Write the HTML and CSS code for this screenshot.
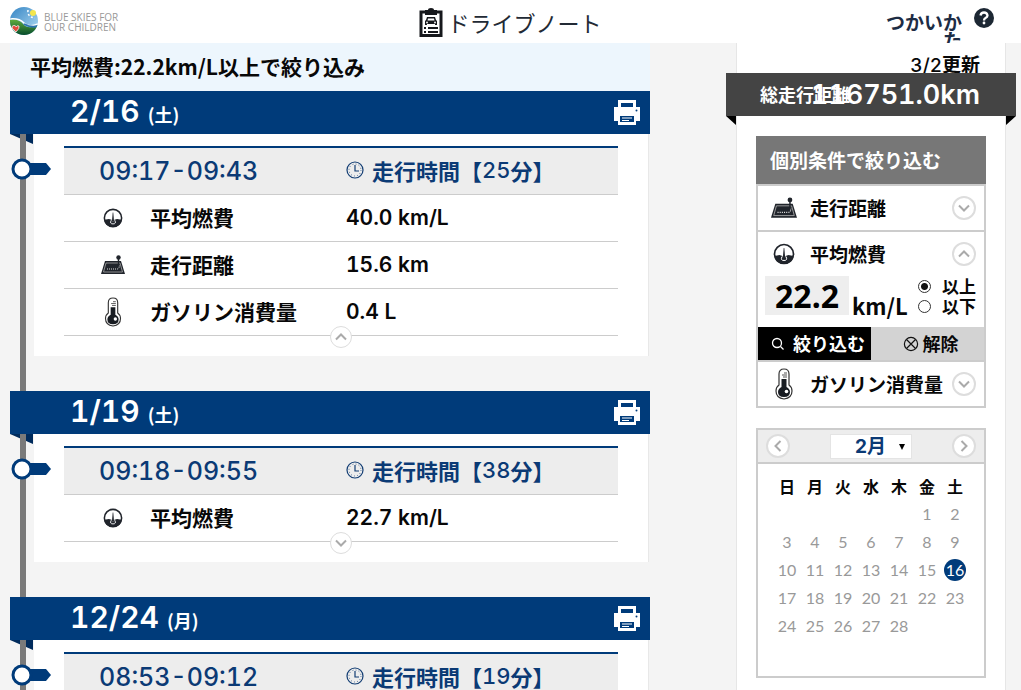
FILE: index.html
```html
<!DOCTYPE html>
<html lang="ja">
<head>
<meta charset="utf-8">
<meta name="viewport" content="width=device-width">
<title>ドライブノート</title>
<link rel="stylesheet" href="styles.css">
</head>
<body>
<svg class="defs" aria-hidden="true">
  <symbol id="printer" viewBox="0 0 26 26"><path fill="#fff" d="M4 0h18v7h4v14h-4v4H4v-4H0V7h4z"/><path fill="#003b7a" d="M7 3h12v4H7zM6 16h14v6H6z"/><path stroke="#fff" stroke-width="1.200" d="M8 18h10M8 20.500h7"/><circle cx="22.500" cy="10.500" r="1" fill="#003b7a"/></symbol>
  <symbol id="gauge" viewBox="0 0 22 22"><circle cx="11" cy="11" r="9.500" fill="#fff" stroke="#20242b" stroke-width="1.700"/><path fill="#20242b" d="M1.500 13l5-1 3 1 .5 2h2l.5-2 3-1 5 1q-1 8-9.500 8T1.500 13z"/><path fill="#20242b" d="M10.700 5h.6l.9 10H9.800z"/><path fill="none" stroke="#fff" d="M9 13.500q-2 4 2 4t2-4"/></symbol>
  <symbol id="road" viewBox="0 0 24 20"><path fill="#20242b" d="M4 6h16l4 13H0z"/><path fill="none" stroke="#aaa" stroke-width=".8" d="M5 8h14l2.500 9h-19z"/><path stroke="#ddd" stroke-dasharray="1 1" fill="none" d="M6 14h10q3 0 2-5"/><path stroke="#20242b" stroke-width="1.400" d="M17.500 3v8"/><circle cx="17.500" cy="2.500" r="2.200" fill="#20242b"/></symbol>
  <symbol id="thermo" viewBox="0 0 18 32"><path fill="#fff" stroke="#333" stroke-width="1.200" d="M4 17V6q0-5 5-5t5 5v11q3 2 3 6 0 7-8 8-8-1-8-8 0-4 3-6z"/><path fill="#181c22" d="M6.500 11h5v8q3.500 2 3.500 5 0 5-6 5t-6-5q0-3 3.500-5z"/><path stroke="#555" d="M7 7h5M9 5h3M8 9h4"/><circle cx="11.500" cy="23.500" r="1.800" fill="#fff"/></symbol>
  <symbol id="clock" viewBox="0 0 18 18"><circle cx="9" cy="9" r="8" fill="none" stroke="#123d73" stroke-width="1.200"/><path fill="none" stroke="#123d73" stroke-width="1.200" d="M9 4v6h4"/><circle cx="9" cy="9" r="6" fill="none" stroke="#123d73" stroke-dasharray=".7 2.440"/></symbol>
  <symbol id="chev" viewBox="0 0 20 20"><path fill="none" stroke="#aaa" stroke-width="2" d="M5 7.500l5 5 5-5"/></symbol>
</svg>

<header class="top">
  <a class="brand" href="#">
    <svg width="28" height="28" viewBox="0 0 28 28" aria-hidden="true">
      <defs><clipPath id="ball"><circle cx="14" cy="14" r="14"/></clipPath>
      <linearGradient id="sky" x2="1" y2="1"><stop stop-color="#3484c4"/><stop offset="1" stop-color="#b5def4"/></linearGradient>
      <linearGradient id="hill" x2="0" y2="1"><stop stop-color="#61ad3e"/><stop offset="1" stop-color="#064c2b"/></linearGradient></defs>
      <g clip-path="url(#ball)"><path fill="url(#sky)" d="M0 0h28v28H0z"/><path fill="url(#hill)" d="M0 13q8-2 13 4t15 1v10H0z"/><path fill="none" stroke="#fff" stroke-width="1.500" d="M0 12q9-1 14 4t14 1"/><path fill="none" stroke="#2d74b0" stroke-width="2" d="M14 17q7 4 14 2"/></g>
      <circle cx="23" cy="6" r="3" fill="#f4e64c"/><path stroke="#fff" stroke-width="1.500" stroke-dasharray="2 2" fill="none" d="M18 3q-1 7 7 8"/>
      <path fill="#e44b3c" stroke="#fff" stroke-width=".7" d="M6 25l-4-4q0-3 2-2.500Q5.500 18 6 20q1-2 3-1 1 2-3 6z"/>
    </svg>
    <span class="brand-text">BLUE SKIES FOR<br>OUR CHILDREN</span>
  </a>
  <h1 class="title">
    <svg width="24" height="30" viewBox="0 0 24 30" aria-hidden="true"><path fill="none" stroke="#16181c" stroke-width="3" d="M2 4h20v23.500H2z"/><path fill="#16181c" d="M6 2h3q0-2 3-2t3 2h3v5H6z"/><path fill="#16181c" d="M8 9h8l1 3 1 1v4h-2v-1H8v1H6v-4l1-1z"/><path fill="#fff" d="M9 10.500h6l.5 2h-7z"/><circle cx="8" cy="14.500" r=".9" fill="#fff"/><circle cx="16" cy="14.500" r=".9" fill="#fff"/><path stroke="#16181c" stroke-width="1.800" d="M5 20h2M9 20h10M5 24h2M9 24h10"/></svg>
    <span>ドライブノート</span>
  </h1>
  <a class="help" href="#">
    <span class="help-text">つかいかた</span>
    <svg width="20" height="20" viewBox="0 0 20 20" aria-hidden="true"><circle cx="10" cy="10" r="10" fill="#1c2733"/><path fill="none" stroke="#fff" stroke-width="2.300" d="M6.500 7.500Q7 4.500 10 4.500t3.500 3q0 1.500-2 2.500-1.500.8-1.500 2.500"/><circle cx="10" cy="15" r="1.400" fill="#fff"/></svg>
  </a>
</header>

<div class="page">
  <main class="log">
    <p class="notice">平均燃費:22.2km/L以上で絞り込み</p>

    <section class="day">
      <div class="bar"><h2>2/16 <small>(土)</small></h2><button class="print" aria-label="印刷"><svg width="26" height="26"><use href="#printer"/></svg></button></div>
      <div class="card">
        <svg class="pin" width="42" height="22" viewBox="0 0 42 22" aria-hidden="true"><path fill="#003b7a" d="M16 5h19l5 6-5 6H16z"/><circle cx="11" cy="11" r="9" fill="#fff" stroke="#003b7a" stroke-width="3"/></svg>
        <div class="trip">
          <div class="trip-head"><span>09:17-09:43</span><b><svg width="18" height="18"><use href="#clock"/></svg>走行時間【<i>25</i>分】</b></div>
          <div class="row"><svg width="20" height="20"><use href="#gauge"/></svg><b>平均燃費</b><span class="value">40.0 km/L</span></div>
          <div class="row"><svg width="24" height="20"><use href="#road"/></svg><b>走行距離</b><span class="value">15.6 km</span></div>
          <div class="row"><svg width="18" height="30"><use href="#thermo"/></svg><b>ガソリン消費量</b><span class="value">0.4 L</span></div>
          <button class="round toggle up" aria-label="閉じる"><svg><use href="#chev"/></svg></button>
        </div>
      </div>
    </section>

    <section class="day">
      <div class="bar"><h2>1/19 <small>(土)</small></h2><button class="print" aria-label="印刷"><svg width="26" height="26"><use href="#printer"/></svg></button></div>
      <div class="card">
        <svg class="pin" width="42" height="22" viewBox="0 0 42 22" aria-hidden="true"><path fill="#003b7a" d="M16 5h19l5 6-5 6H16z"/><circle cx="11" cy="11" r="9" fill="#fff" stroke="#003b7a" stroke-width="3"/></svg>
        <div class="trip">
          <div class="trip-head"><span>09:18-09:55</span><b><svg width="18" height="18"><use href="#clock"/></svg>走行時間【<i>38</i>分】</b></div>
          <div class="row"><svg width="20" height="20"><use href="#gauge"/></svg><b>平均燃費</b><span class="value">22.7 km/L</span></div>
          <button class="round toggle" aria-label="開く"><svg><use href="#chev"/></svg></button>
        </div>
      </div>
    </section>

    <section class="day">
      <div class="bar"><h2>12/24 <small>(月)</small></h2><button class="print" aria-label="印刷"><svg width="26" height="26"><use href="#printer"/></svg></button></div>
      <div class="card">
        <svg class="pin" width="42" height="22" viewBox="0 0 42 22" aria-hidden="true"><path fill="#003b7a" d="M16 5h19l5 6-5 6H16z"/><circle cx="11" cy="11" r="9" fill="#fff" stroke="#003b7a" stroke-width="3"/></svg>
        <div class="trip">
          <div class="trip-head"><span>08:53-09:12</span><b><svg width="18" height="18"><use href="#clock"/></svg>走行時間【<i>19</i>分】</b></div>
        </div>
      </div>
    </section>
  </main>

  <aside class="side">
    <p class="updated"><i>3/2</i>更新</p>
    <div class="ribbon"><span class="ribbon-label">総走行距離</span><strong>116751.0km</strong></div>
    <form class="filter">
      <h2>個別条件で絞り込む</h2>
      <div class="filter-box">
        <div class="item"><svg width="26" height="22"><use href="#road"/></svg><b>走行距離</b><button type="button" class="round" aria-label="開く"><svg><use href="#chev"/></svg></button></div>
        <div class="item"><svg width="22" height="22"><use href="#gauge"/></svg><b>平均燃費</b><button type="button" class="round up" aria-label="閉じる"><svg><use href="#chev"/></svg></button></div>
        <div class="entry">
          <input class="amount" id="amount" type="text" value="22.2"><label class="unit" for="amount">km/L</label>
          <div class="options">
            <label><input type="radio" name="side" checked>以上</label>
            <label><input type="radio" name="side">以下</label>
          </div>
        </div>
        <div class="actions">
          <button type="button" class="apply"><svg width="14" height="14" viewBox="0 0 14 14" aria-hidden="true"><circle cx="6" cy="6" r="4.500" fill="none" stroke="#fff" stroke-width="1.300"/><path stroke="#fff" stroke-width="1.300" d="M9.500 9.500l3 3"/></svg>絞り込む</button>
          <button type="button" class="clear"><svg width="16" height="16" viewBox="0 0 16 16" aria-hidden="true"><path fill="none" stroke="#111" stroke-width="1.200" d="M3.500 3.500l9 9M12.500 3.500l-9 9"/><circle cx="8" cy="8" r="6.600" fill="none" stroke="#111" stroke-width="1.200"/></svg>解除</button>
        </div>
        <div class="item"><svg width="20" height="32"><use href="#thermo"/></svg><b>ガソリン消費量</b><button type="button" class="round" aria-label="開く"><svg><use href="#chev"/></svg></button></div>
      </div>
    </form>
    <section class="calendar">
      <div class="cal-head">
        <button class="round left" aria-label="前の月"><svg><use href="#chev"/></svg></button>
        <div class="month"><select aria-label="月"><option>2月</option></select><svg width="6" height="6" viewBox="0 0 6 6" aria-hidden="true"><path d="M0 0h6L3 6z"/></svg></div>
        <button class="round right" aria-label="次の月"><svg><use href="#chev"/></svg></button>
      </div>
      <table>
        <thead><tr><th>日</th><th>月</th><th>火</th><th>水</th><th>木</th><th>金</th><th>土</th></tr></thead>
        <tbody>
          <tr><td></td><td></td><td></td><td></td><td></td><td>1</td><td>2</td></tr>
          <tr><td>3</td><td>4</td><td>5</td><td>6</td><td>7</td><td>8</td><td>9</td></tr>
          <tr><td>10</td><td>11</td><td>12</td><td>13</td><td>14</td><td>15</td><td><span class="today">16</span></td></tr>
          <tr><td>17</td><td>18</td><td>19</td><td>20</td><td>21</td><td>22</td><td>23</td></tr>
          <tr><td>24</td><td>25</td><td>26</td><td>27</td><td>28</td><td></td><td></td></tr>
        </tbody>
      </table>
    </section>
  </aside>
</div>
</body>
</html>
```
FILE: styles.css
```css
* { box-sizing: border-box; }
body {
  margin: 0;
  height: 100vh;
  overflow: hidden;
  background: #f4f4f4;
  color: #080808;
  font-family: "Noto Sans CJK JP", sans-serif;
  font-size: 20px;
  font-variant-numeric: tabular-nums;
}
h1, h2, p { margin: 0; }
i { font-style: normal; font-family: Inter, sans-serif; font-weight: 500; }
a { color: inherit; text-decoration: none; }
button { border: 0; padding: 0; margin: 0; font: inherit; color: inherit; cursor: pointer; }
svg { display: block; flex: none; }
.defs { position: absolute; width: 0; height: 0; }

.top {
  display: grid;
  grid-template-columns: 1fr auto 1fr;
  height: 43px;
  padding: 0 10px;
  overflow: hidden;
  background: #fff;
}
.brand { display: flex; gap: 6px; padding-top: 7px; }
.brand-text { padding-top: 5px; font: 500 10px/10px "Open Sans", sans-serif; color: #999; }
.title { display: flex; gap: 4px; padding-top: 8px; font-size: 22px; line-height: 28px; font-weight: 400; color: #222a35; }
.help { display: flex; justify-content: flex-end; gap: 12px; padding: 8px 17px 0 0; }
.help-text { width: 78px; padding-top: 5px; text-align: right; font-size: 19px; line-height: 18px; font-weight: 700; color: #1d2c44; word-break: break-all; }

.page {
  display: grid;
  grid-template-columns: minmax(0, 1fr) 270px;
  gap: 86px;
  padding: 0 15px 0 10px;
}
.notice { height: 48px; padding-left: 20px; background: #edf6fd; font-size: 21px; line-height: 46px; font-weight: 700; }

.day { position: relative; padding-bottom: 35px; }
.day::before { content: ""; position: absolute; z-index: 1; left: 10px; top: 0; bottom: 0; width: 6px; background: #7a7a7a; }
.bar { position: relative; z-index: 2; display: flex; justify-content: space-between; align-items: center; height: 43px; padding: 0 10px 0 60px; background: #003b7a; color: #fff; }
.bar h2 { font: 600 30px/40px Inter, sans-serif; font-variant-numeric: tabular-nums; }
.bar small { font: 700 18px/40px "Noto Sans CJK JP", sans-serif; }
.print { background: none; }
.card { position: relative; margin: 0 1px 0 24px; padding: 12px 30px 20px; background: #fff; border: 1px solid #e8e8e8; border-width: 0 1px 0 0; }
.card::before { content: ""; position: absolute; left: -24px; top: 0; width: 23px; height: 10px; background: #002b5c; clip-path: polygon(0 0, 100% 0, 100% 100%); }
.pin { position: absolute; z-index: 2; left: -23px; top: 24px; }
.trip { position: relative; }
.trip-head { display: grid; grid-template-columns: 247px 1fr; align-items: center; height: 49px; padding-left: 35px; border-top: 2px solid #003b7a; border-bottom: 1px solid #ccc; background: #ededed; color: #0b3a75; font-size: 22px; }
.trip-head span { font: 500 25px/30px Inter, sans-serif; font-variant-numeric: tabular-nums; }
.trip-head b { display: flex; align-items: center; height: 46px; padding-bottom: 2px; }
.trip-head b svg { margin-right: 8px; }
.row { display: grid; grid-template-columns: 74px 196px 1fr; align-items: center; height: 47px; padding-left: 12px; border-bottom: 1px solid #ccc; }
.row svg { justify-self: center; }
.row b { padding-bottom: 2px; font-size: 21px; }
.value { font: 600 21px/46px Inter, sans-serif; font-variant-numeric: tabular-nums; }

.round { display: grid; place-items: center; width: 24px; height: 24px; border: 2px solid #ddd; border-radius: 50%; background: #fff; }
.round svg { width: 20px; height: 20px; }
.up svg { transform: rotate(180deg); }
.left svg { transform: rotate(90deg); }
.right svg { transform: rotate(-90deg); }
.toggle { position: absolute; left: 0; right: 0; bottom: -12px; margin: 0 auto; width: 22px; height: 22px; border-width: 1px; }

.side { padding: 0 20px; background: #fff; border: 1px solid #e6e6e6; border-width: 0 1px; }
.side > * { margin-left: -1px; margin-right: -1px; }
.updated { height: 30px; padding-right: 6px; text-align: right; font-size: 19px; line-height: 42px; font-weight: 700; }
.side > .ribbon { position: relative; display: grid; height: 43px; margin: 0 -31px 20px; padding: 0 36px 0 34px; background: #444; color: #fff; }
.ribbon > * { grid-area: 1 / 1; }
.ribbon-label { font-size: 18px; line-height: 42px; font-weight: 700; }
.ribbon strong { justify-self: end; font: 600 27px/44px Inter, sans-serif; font-variant-numeric: tabular-nums; }
.ribbon::before, .ribbon::after { content: ""; position: absolute; top: 100%; width: 10px; height: 9px; background: #000; }
.ribbon::before { left: 0; clip-path: polygon(0 0, 100% 0, 100% 100%); }
.ribbon::after { right: 0; clip-path: polygon(0 0, 100% 0, 0 100%); }

.filter h2 { height: 48px; padding-left: 14px; background: #777; color: #fff; font-size: 19px; line-height: 48px; }
.filter-box { border: 2px solid #ccc; }
.item { display: grid; grid-template-columns: 52px 1fr 24px; align-items: center; height: 44px; padding-right: 8px; font-size: 19px; line-height: 44px; }
.item:first-child { height: 46px; border-bottom: 2px solid #ccc; }
.item > svg { justify-self: center; }
.entry { display: flex; height: 51px; padding: 0 8px 0 7px; }
.amount { width: 84px; height: 39px; border: 0; padding: 0; background: #eee; text-align: center; font: 700 32px/39px "Noto Sans", sans-serif; color: #000; }
.unit { padding: 14px 0 0 3px; font-size: 22px; line-height: 30px; font-weight: 700; }
.options { flex: 1; }
.options label { display: flex; align-items: center; justify-content: flex-end; gap: 11px; font-size: 17px; line-height: 20px; font-weight: 700; }
.options input { appearance: none; flex: none; width: 13px; height: 13px; margin: 0; border: 1px solid #333; border-radius: 50%; background: #fff; }
.options input:checked { background: radial-gradient(circle, #111 3px, #fff 4px); }
.actions { display: grid; grid-template-columns: 1fr 1fr; height: 35px; border-bottom: 2px solid #ccc; font-size: 18px; font-weight: 700; }
.actions button { display: flex; align-items: center; justify-content: center; gap: 8px; line-height: 33px; }
.apply { padding-left: 7px; background: #000; color: #fff; }
.actions .clear { gap: 4px; padding-left: 6px; background: #d3d3d3; }

.side > .calendar { margin-top: 20px; min-height: 250px; border: 2px solid #ccc; }
.cal-head { display: flex; align-items: center; justify-content: space-between; height: 34px; padding: 0 8px; background: #ededed; border-bottom: 2px solid #ccc; }
.month { position: relative; }
.month select { appearance: none; display: block; width: 82px; height: 25px; padding: 0 0 0 24px; border: 1px solid #e4e4e4; border-radius: 0; background: #fff; color: #0b3a75; font: 700 19px/23px Inter, "Noto Sans CJK JP", sans-serif; }
.month svg { position: absolute; right: 7px; top: 10px; }
table { width: 196px; margin: 8px auto 0 15px; border-collapse: collapse; table-layout: fixed; }
th, td { height: 28px; padding: 0; text-align: center; font-size: 16px; line-height: 22px; }
td { font-family: Lato, sans-serif; color: #999; }
.today { display: block; width: 22px; height: 22px; margin: 0 auto; border-radius: 50%; background: #003b7a; color: #fff; }
```
